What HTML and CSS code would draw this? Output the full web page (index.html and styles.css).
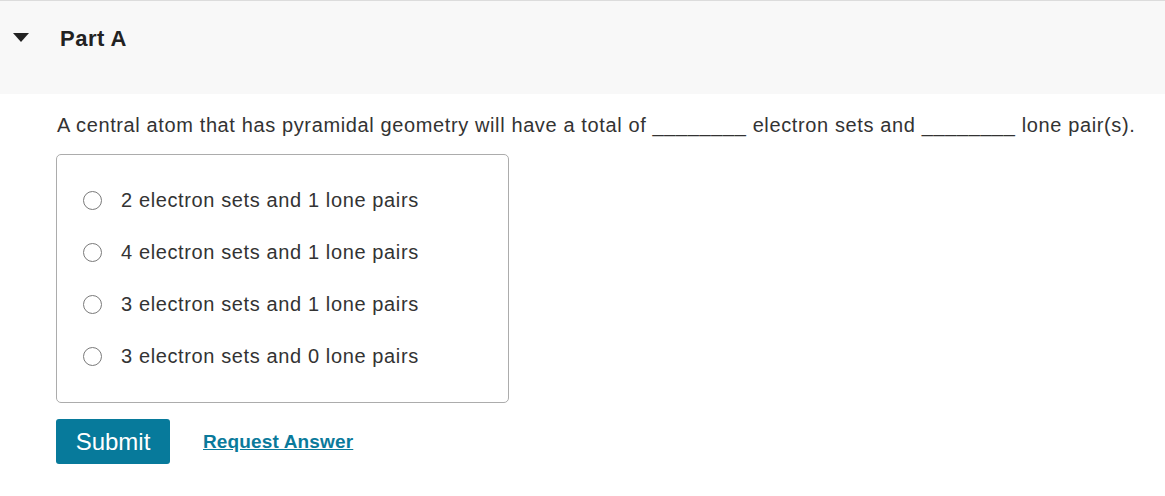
FILE: index.html
```html
<!DOCTYPE html>
<html>
<head>
<meta charset="utf-8">
<link rel="stylesheet" href="styles.css">
</head>
<body>
<div class="part">
  <div class="part-header">
    <span class="caret"></span>
    <h2 class="part-title">Part A</h2>
  </div>
  <div class="part-body">
    <p class="question">A central atom that has pyramidal geometry will have a total of ________ electron sets and ________ lone pair(s).</p>
    <div class="choices">
      <label class="choice"><span class="radio"></span><span>2 electron sets and 1 lone pairs</span></label>
      <label class="choice"><span class="radio"></span><span>4 electron sets and 1 lone pairs</span></label>
      <label class="choice"><span class="radio"></span><span>3 electron sets and 1 lone pairs</span></label>
      <label class="choice"><span class="radio"></span><span>3 electron sets and 0 lone pairs</span></label>
    </div>
    <div class="actions">
      <button class="submit">Submit</button>
      <a class="request" href="#">Request Answer</a>
    </div>
  </div>
</div>
</body>
</html>
```
FILE: styles.css
```css
html, body {
  margin: 0;
  padding: 0;
  background: #fff;
  font-family: "Liberation Sans", Arial, sans-serif;
  color: #333;
}
.part {
  border-top: 1px solid #dcdcdc;
}
.part-header {
  background: #f8f8f8;
  height: 93px;
  display: flex;
  align-items: flex-start;
  padding-top: 26px;
  box-sizing: border-box;
}
.caret {
  width: 0;
  height: 0;
  border-left: 8.5px solid transparent;
  border-right: 8.5px solid transparent;
  border-top: 9px solid #222;
  margin: 6px 0 0 13px;
}
.part-title {
  margin: 0 0 0 31px;
  font-size: 22px;
  font-weight: bold;
  color: #222;
  line-height: 24px;
  letter-spacing: 0.5px;
}
.part-body {
  padding: 0 0 0 56px;
}
.question {
  margin: 0;
  padding: 19px 0 0 1px;
  font-size: 20px;
  line-height: 24px;
  letter-spacing: 0.62px;
  white-space: nowrap;
}
.choices {
  margin-top: 17px;
  width: 453px;
  box-sizing: border-box;
  border: 1px solid #acacac;
  border-radius: 5px;
  padding: 33px 0 34px 26px;
  display: flex;
  flex-direction: column;
  gap: 28px;
}
.choice {
  display: flex;
  align-items: center;
  gap: 19px;
  font-size: 20px;
  line-height: 24px;
  letter-spacing: 0.62px;
}
.radio {
  width: 19px;
  height: 19px;
  border: 1.5px solid #7a7a7a;
  border-radius: 50%;
  box-sizing: border-box;
  flex: none;
}
.actions {
  margin-top: 16px;
  display: flex;
  align-items: center;
  gap: 33px;
}
.submit {
  width: 114px;
  height: 45px;
  background: #077a9b;
  color: #fff;
  border: none;
  border-radius: 3px;
  font-family: "Liberation Sans", Arial, sans-serif;
  font-size: 24px;
  padding: 0;
}
.request {
  color: #0a7a9b;
  font-weight: bold;
  font-size: 19px;
  letter-spacing: 0.15px;
  text-decoration: underline;
}
```
